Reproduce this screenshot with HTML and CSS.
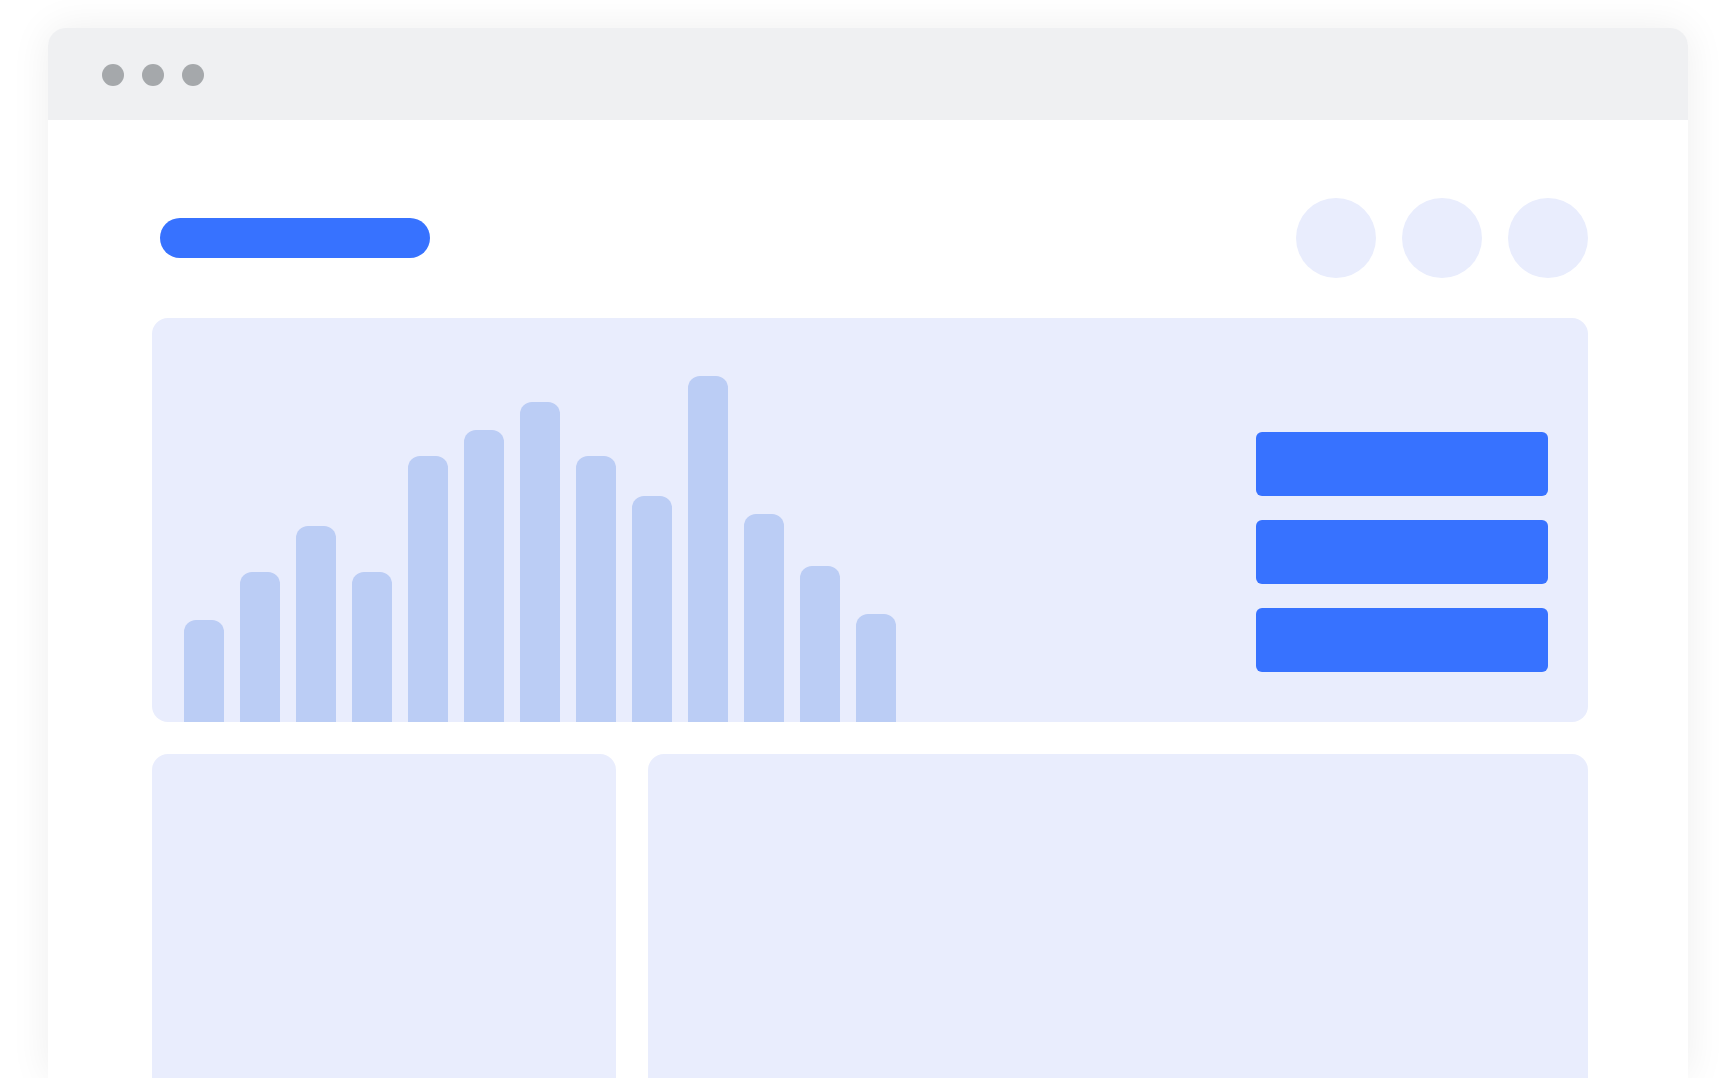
FILE: index.html
```html
<!DOCTYPE html>
<html lang="en">
<head>
<meta charset="utf-8">
<title>Dashboard wireframe</title>
<link rel="stylesheet" href="styles.css">
</head>
<body>
<div class="stage">
  <div class="window">
    <div class="titlebar">
      <span class="dot"></span><span class="dot"></span><span class="dot"></span>
    </div>
    <div class="content">
      <div class="header">
        <div class="pill"></div>
        <div class="avatars">
          <span class="avatar"></span><span class="avatar"></span><span class="avatar"></span>
        </div>
      </div>
      <div class="chart-panel">
        <div class="bars">
          <div class="bar" style="height:102px"></div>
          <div class="bar" style="height:150px"></div>
          <div class="bar" style="height:196px"></div>
          <div class="bar" style="height:150px"></div>
          <div class="bar" style="height:266px"></div>
          <div class="bar" style="height:292px"></div>
          <div class="bar" style="height:320px"></div>
          <div class="bar" style="height:266px"></div>
          <div class="bar" style="height:226px"></div>
          <div class="bar" style="height:346px"></div>
          <div class="bar" style="height:208px"></div>
          <div class="bar" style="height:156px"></div>
          <div class="bar" style="height:108px"></div>
        </div>
        <div class="actions">
          <div class="action"></div>
          <div class="action"></div>
          <div class="action"></div>
        </div>
      </div>
      <div class="bottom-row">
        <div class="card"></div>
        <div class="card"></div>
      </div>
    </div>
  </div>
</div>
</body>
</html>
```

FILE: styles.css
```css
html, body {
  margin: 0;
  padding: 0;
  background: #ffffff;
  overflow: hidden;
  height: 100%;
}

.stage {
  padding: 28px 0 0 48px;
  height: 100%;
  box-sizing: border-box;
}

.window {
  width: 1640px;
  height: 100%;
  background: #ffffff;
  border-radius: 18px 18px 0 0;
  box-shadow: 0 0 40px rgba(0, 0, 0, 0.07);
  overflow: hidden;
}

.titlebar {
  height: 92px;
  background: #eff0f2;
  display: flex;
  align-items: center;
  gap: 18px;
  padding: 2px 0 0 54px;
  box-sizing: border-box;
}

.dot {
  width: 22px;
  height: 22px;
  border-radius: 50%;
  background: #a5a8ab;
}

.content {
  padding: 78px 100px 0 104px;
}

.header {
  display: flex;
  justify-content: space-between;
  align-items: center;
  height: 80px;
}

.pill {
  width: 270px;
  height: 40px;
  margin-left: 8px;
  border-radius: 20px;
  background: #3772ff;
}

.avatars {
  display: flex;
  gap: 26px;
}

.avatar {
  width: 80px;
  height: 80px;
  border-radius: 50%;
  background: #e9edfd;
}

.chart-panel {
  margin-top: 40px;
  height: 404px;
  background: #e9edfd;
  border-radius: 16px;
  overflow: hidden;
  display: flex;
  padding: 0 40px 0 32px;
}

.bars {
  display: flex;
  align-items: flex-end;
  gap: 16px;
}

.bar {
  width: 40px;
  background: #bbcdf5;
  border-radius: 12px 12px 0 0;
}

.actions {
  margin-left: auto;
  padding-top: 114px;
  display: flex;
  flex-direction: column;
  gap: 24px;
}

.action {
  width: 292px;
  height: 64px;
  border-radius: 6px;
  background: #3772ff;
}

.bottom-row {
  margin-top: 32px;
  display: grid;
  grid-template-columns: 464px 940px;
  gap: 32px;
}

.card {
  height: 360px;
  background: #e9edfd;
  border-radius: 16px;
}
```
